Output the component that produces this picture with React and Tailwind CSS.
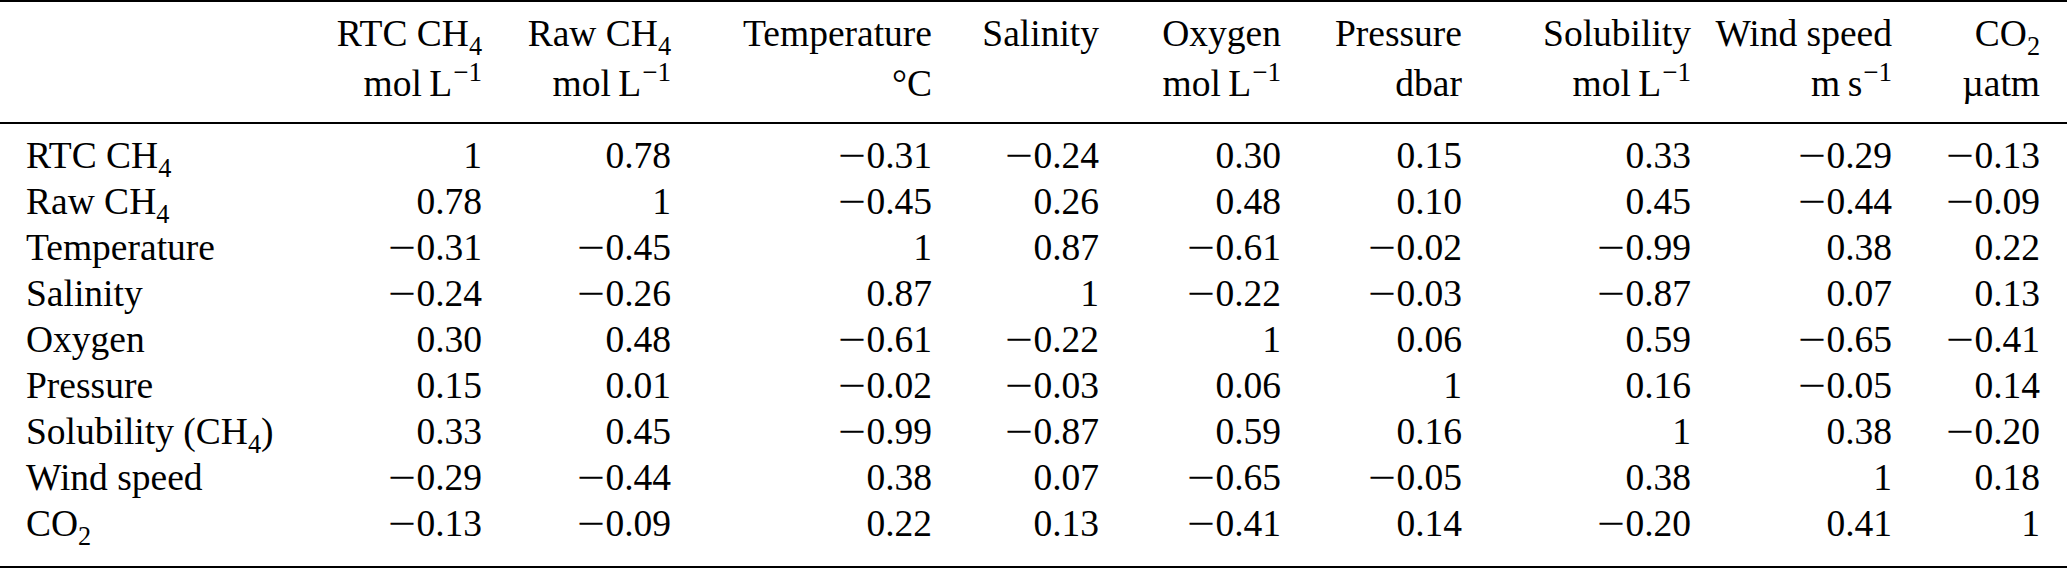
import React from "react";

const Sub = ({ children }) => (
  <span className="text-[0.7em] align-sub leading-[0]">{children}</span>
);
const Sup = ({ children }) => (
  <span className="text-[0.72em] align-[15px] leading-[0] ml-[1px]">{children}</span>
);

const Num = ({ v }) => {
  if (v.startsWith("-")) {
    return (
      <span>
        <span className="inline-block origin-left scale-x-[1.32] mr-[7px]">−</span>
        {v.slice(1)}
      </span>
    );
  }
  return <span>{v}</span>;
};

const molL = (
  <>
    mol{"\u2009"}L<Sup>−1</Sup>
  </>
);

const headers = [
  { name: <>RTC CH<Sub>4</Sub></>, unit: molL },
  { name: <>Raw CH<Sub>4</Sub></>, unit: molL },
  { name: "Temperature", unit: "°C" },
  { name: "Salinity", unit: "" },
  { name: "Oxygen", unit: molL },
  { name: "Pressure", unit: "dbar" },
  { name: "Solubility", unit: molL },
  { name: "Wind speed", unit: <>m{"\u2009"}s<Sup>−1</Sup></> },
  { name: <>CO<Sub>2</Sub></>, unit: "µatm" },
];

const rows = [
  [<>RTC CH<Sub>4</Sub></>, ["1", "0.78", "-0.31", "-0.24", "0.30", "0.15", "0.33", "-0.29", "-0.13"]],
  [<>Raw CH<Sub>4</Sub></>, ["0.78", "1", "-0.45", "0.26", "0.48", "0.10", "0.45", "-0.44", "-0.09"]],
  ["Temperature", ["-0.31", "-0.45", "1", "0.87", "-0.61", "-0.02", "-0.99", "0.38", "0.22"]],
  ["Salinity", ["-0.24", "-0.26", "0.87", "1", "-0.22", "-0.03", "-0.87", "0.07", "0.13"]],
  ["Oxygen", ["0.30", "0.48", "-0.61", "-0.22", "1", "0.06", "0.59", "-0.65", "-0.41"]],
  ["Pressure", ["0.15", "0.01", "-0.02", "-0.03", "0.06", "1", "0.16", "-0.05", "0.14"]],
  [<>Solubility (CH<Sub>4</Sub>)</>, ["0.33", "0.45", "-0.99", "-0.87", "0.59", "0.16", "1", "0.38", "-0.20"]],
  ["Wind speed", ["-0.29", "-0.44", "0.38", "0.07", "-0.65", "-0.05", "0.38", "1", "0.18"]],
  [<>CO<Sub>2</Sub></>, ["-0.13", "-0.09", "0.22", "0.13", "-0.41", "0.14", "-0.20", "0.41", "1"]],
];

const gridCols =
  "grid grid-cols-[274px_182px_189px_261px_167px_182px_181px_229px_201px_148px]";

export default function App() {
  return (
    <div className="w-[2067px] h-[570px] bg-white text-black font-['Liberation_Serif','Times_New_Roman',serif] text-[37.5px]">
      <div className="h-[2px] bg-black" />
      <div className={`${gridCols} pl-[26px] pt-[7px] pb-[13px] leading-[50px]`}>
        <div />
        {headers.map((h, i) => (
          <div key={i} className="flex flex-col items-end whitespace-nowrap">
            <div>{h.name}</div>
            <div>{h.unit || "\u00a0"}</div>
          </div>
        ))}
      </div>
      <div className="h-[2px] bg-black" />
      <div className={`${gridCols} pl-[26px] pt-[9px] pb-[19px] leading-[46px]`}>
        {rows.map(([label, vals], r) => (
          <React.Fragment key={r}>
            <div className="whitespace-nowrap">{label}</div>
            {vals.map((v, c) => (
              <div key={c} className="text-right whitespace-nowrap">
                <Num v={v} />
              </div>
            ))}
          </React.Fragment>
        ))}
      </div>
      <div className="h-[2px] bg-black" />
    </div>
  );
}
